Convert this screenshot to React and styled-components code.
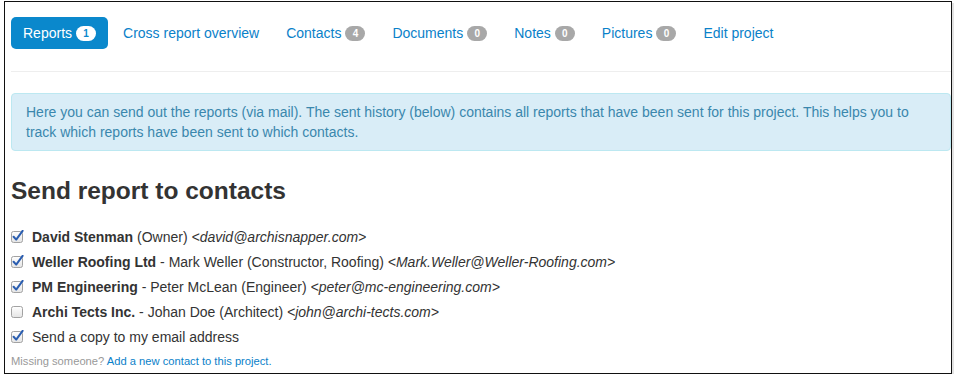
import React from "react";
import styled, { createGlobalStyle } from "styled-components";

const Global = createGlobalStyle`
  html, body { margin: 0; padding: 0; background: #fff; }
  body { font-family: "Liberation Sans", Arial, Helvetica, sans-serif; color: #333; font-size: 14px; }
`;

const Frame = styled.div`
  box-sizing: border-box;
  margin: 1px 0 0 4px;
  width: 948px;
  height: 373px;
  border: 1px solid #111;
  box-shadow: 2px 2px 0 #e2e2e2;
  padding: 15px 0 0 6px;
  overflow: hidden;
`;

const Nav = styled.ul`
  list-style: none;
  margin: 0;
  padding: 0;
  display: flex;
  gap: 3px;
`;

const NavLink = styled.a`
  display: flex;
  align-items: center;
  gap: 4px;
  padding: 8px 12px;
  line-height: 16px;
  font-size: 14px;
  border-radius: 5px;
  text-decoration: none;
  color: ${(p) => (p.$active ? "#fff" : "#0a81c9")};
  background: ${(p) => (p.$active ? "#0a88cc" : "transparent")};
`;

const Badge = styled.span`
  display: inline-flex;
  align-items: center;
  justify-content: center;
  min-width: 20px;
  height: 15px;
  box-sizing: border-box;
  padding: 0 6px;
  border-radius: 8px;
  font-size: 10px;
  font-weight: bold;
  margin-top: 1px;
  background: ${(p) => (p.$active ? "#fff" : "#a8a8a8")};
  color: ${(p) => (p.$active ? "#0a88cc" : "#fff")};
`;

const Rule = styled.hr`
  border: 0;
  border-top: 1px solid #eee;
  margin: 22px 0 21px;
`;

const Alert = styled.div`
  background: #d9edf7;
  border: 1px solid #bce8f1;
  border-radius: 4px;
  color: #3a87ad;
  padding: 8px 35px 8px 14px;
  line-height: 20px;
  font-size: 14px;
`;

const Heading = styled.h3`
  margin: 20px 0 13px;
  font-size: 24.5px;
  line-height: 40px;
  font-weight: bold;
  color: #333;
`;

const List = styled.div`
  display: flex;
  flex-direction: column;
`;

const Row = styled.label`
  display: flex;
  align-items: center;
  gap: 8px;
  height: 25px;
  font-size: 14px;
  color: #333;
  white-space: nowrap;
`;

const Name = styled.b`
  font-weight: bold;
`;

const Email = styled.i`
  font-style: italic;
`;

const Box = styled.svg`
  flex: none;
  width: 13px;
  height: 13px;
  margin-top: -1px;
`;

const Footer = styled.p`
  margin: 4px 0 0;
  font-size: 11.2px;
  line-height: 16px;
  color: #999;
`;

const Link = styled.a`
  color: #0a81c9;
  text-decoration: none;
`;

function Check({ checked }) {
  return (
    <Box viewBox="0 0 13 13">
      <defs>
        <linearGradient id="cbg" x1="0" y1="0" x2="0" y2="1">
          <stop offset="0" stopColor="#ffffff" />
          <stop offset="1" stopColor="#e4e4e4" />
        </linearGradient>
      </defs>
      <rect x="0.5" y="1.5" width="11" height="11" rx="2" fill="url(#cbg)" stroke="#a2a2a2" />
      {checked && (
        <path d="M2.6 6.8 L5.2 9.6 L11.6 0.8" fill="none" stroke="#2a5db0" strokeWidth="2" strokeLinecap="round" strokeLinejoin="round" />
      )}
    </Box>
  );
}

const tabs = [
  { label: "Reports", badge: 1, active: true },
  { label: "Cross report overview" },
  { label: "Contacts", badge: 4 },
  { label: "Documents", badge: 0 },
  { label: "Notes", badge: 0 },
  { label: "Pictures", badge: 0 },
  { label: "Edit project" },
];

const contacts = [
  { name: "David Stenman", rest: " (Owner) ", email: "<david@archisnapper.com>", checked: true },
  { name: "Weller Roofing Ltd", rest: " - Mark Weller (Constructor, Roofing) ", email: "<Mark.Weller@Weller-Roofing.com>", checked: true },
  { name: "PM Engineering", rest: " - Peter McLean (Engineer) ", email: "<peter@mc-engineering.com>", checked: true },
  { name: "Archi Tects Inc.", rest: " - Johan Doe (Architect) ", email: "<john@archi-tects.com>", checked: false },
];

export default function App() {
  return (
    <>
      <Global />
      <Frame>
        <Nav>
          {tabs.map((t) => (
            <li key={t.label}>
              <NavLink href="#" $active={t.active}>
                {t.label}
                {t.badge !== undefined && <Badge $active={t.active}>{t.badge}</Badge>}
              </NavLink>
            </li>
          ))}
        </Nav>
        <Rule />
        <Alert>
          Here you can send out the reports (via mail). The sent history (below) contains all reports that have been sent for this project. This helps you to track which reports have been sent to which contacts.
        </Alert>
        <Heading>Send report to contacts</Heading>
        <List>
          {contacts.map((c) => (
            <Row key={c.name}>
              <Check checked={c.checked} />
              <span>
                <Name>{c.name}</Name>
                {c.rest}
                <Email>{c.email}</Email>
              </span>
            </Row>
          ))}
          <Row>
            <Check checked />
            <span>Send a copy to my email address</span>
          </Row>
        </List>
        <Footer>
          Missing someone? <Link href="#">Add a new contact to this project.</Link>
        </Footer>
      </Frame>
    </>
  );
}
